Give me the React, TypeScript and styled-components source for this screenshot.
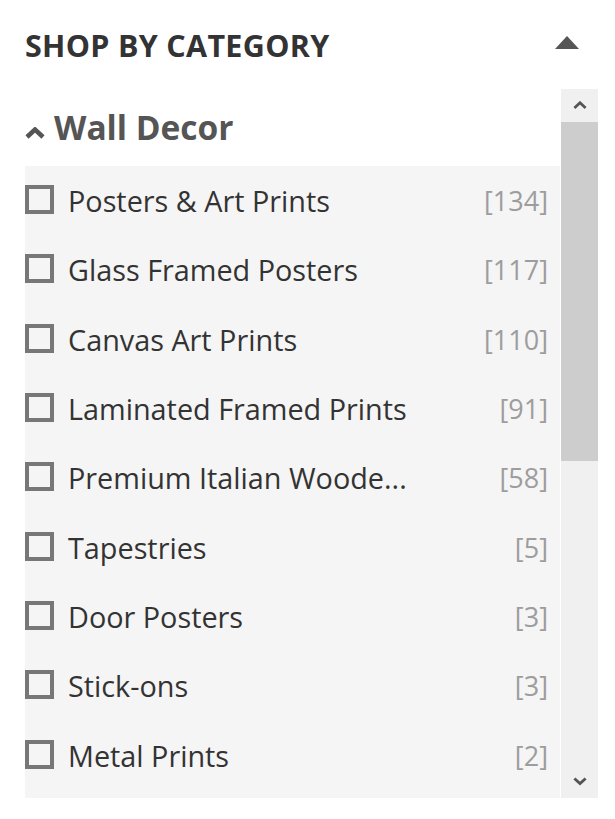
import React from "react";
import styled, { createGlobalStyle } from "styled-components";

const GlobalStyle = createGlobalStyle`
    body {
        margin: 0;
        background: #fff;
        font-family: "Open Sans", "Liberation Sans", sans-serif;
    }
`

const Sidebar = styled.aside`
    width: 615px;
    padding: 0 17px 0 25px;
    box-sizing: border-box;
`

const Header = styled.div`
    height: 89px;
    display: flex;
    align-items: center;
    justify-content: space-between;
    padding-right: 19px;
`

const Title = styled.h2`
    margin: 0;
    font-size: 30.5px;
    font-weight: 700;
    color: #333;
    letter-spacing: 0.3px;
`

const Caret = styled.span`
    width: 0;
    height: 0;
    border-left: 12px solid transparent;
    border-right: 12px solid transparent;
    border-bottom: 13px solid #555;
    margin-bottom: 4px;
`

const ScrollArea = styled.div`
    height: 709px;
    display: flex;
`

const Content = styled.div`
    flex: 1;
    overflow: hidden;
    display: flex;
    flex-direction: column;
`

const GroupHeading = styled.div`
    height: 77px;
    flex-shrink: 0;
    display: flex;
    align-items: center;
    gap: 9px;
    font-size: 33.5px;
    font-weight: 700;
    color: #555;
    padding-bottom: 1px;
    box-sizing: border-box;
`

const HeadingIcon = styled.span`
    display: flex;
    margin-top: 12px;
`

const List = styled.ul`
    flex: 1;
    margin: 0;
    padding: 0 12px 0 0;
    list-style: none;
    background: #f5f5f5;
`

const Row = styled.li`
    height: 69.3px;
    display: flex;
    align-items: center;
    font-size: 28.8px;
    color: #333;
`

const Box = styled.span`
    width: 29px;
    height: 29px;
    border: 4px solid #777;
    box-sizing: border-box;
    flex-shrink: 0;
    margin-right: 14px;
    margin-top: -2px;
`

const Label = styled.span`
    flex: 1;
    white-space: nowrap;
`

const Count = styled.span`
    font-size: 27px;
    color: #9d9d9d;
`

const Scrollbar = styled.div`
    width: 37px;
    margin-left: 1px;
    background: #f0f0f0;
    display: flex;
    flex-direction: column;
`

const ArrowButton = styled.div`
    height: 33px;
    display: flex;
    align-items: center;
    justify-content: center;
`

const Thumb = styled.div`
    height: 339px;
    background: #cdcdcd;
`

const Track = styled.div`
    flex: 1;
`

const items: [string, number][] = [
    ["Posters & Art Prints", 134],
    ["Glass Framed Posters", 117],
    ["Canvas Art Prints", 110],
    ["Laminated Framed Prints", 91],
    ["Premium Italian Woode...", 58],
    ["Tapestries", 5],
    ["Door Posters", 3],
    ["Stick-ons", 3],
    ["Metal Prints", 2],
]

function Chevron({ up, size, color, weight }: { up: boolean; size: number; color: string; weight: number }) {
    return (
        <svg width={size} height={size * 0.6} viewBox="0 0 20 12">
            <path
                d={up ? "M2 10 L10 2.5 L18 10" : "M2 2 L10 9.5 L18 2"}
                fill="none"
                stroke={color}
                strokeWidth={weight}
            />
        </svg>
    )
}

export default function App() {
    return (
        <React.Fragment>
            <GlobalStyle />
            <Sidebar>
                <Header>
                    <Title>SHOP BY CATEGORY</Title>
                    <Caret />
                </Header>
                <ScrollArea>
                    <Content>
                        <GroupHeading>
                            <HeadingIcon>
                                <Chevron up size={20} color="#555" weight={4.5} />
                            </HeadingIcon>
                            Wall Decor
                        </GroupHeading>
                        <List>
                            {items.map(([name, count]) => (
                                <Row key={name}>
                                    <Box />
                                    <Label>{name}</Label>
                                    <Count>[{count}]</Count>
                                </Row>
                            ))}
                        </List>
                    </Content>
                    <Scrollbar>
                        <ArrowButton>
                            <Chevron up size={14} color="#555" weight={4} />
                        </ArrowButton>
                        <Thumb />
                        <Track />
                        <ArrowButton>
                            <Chevron up={false} size={14} color="#555" weight={4} />
                        </ArrowButton>
                    </Scrollbar>
                </ScrollArea>
            </Sidebar>
        </React.Fragment>
    )
}
